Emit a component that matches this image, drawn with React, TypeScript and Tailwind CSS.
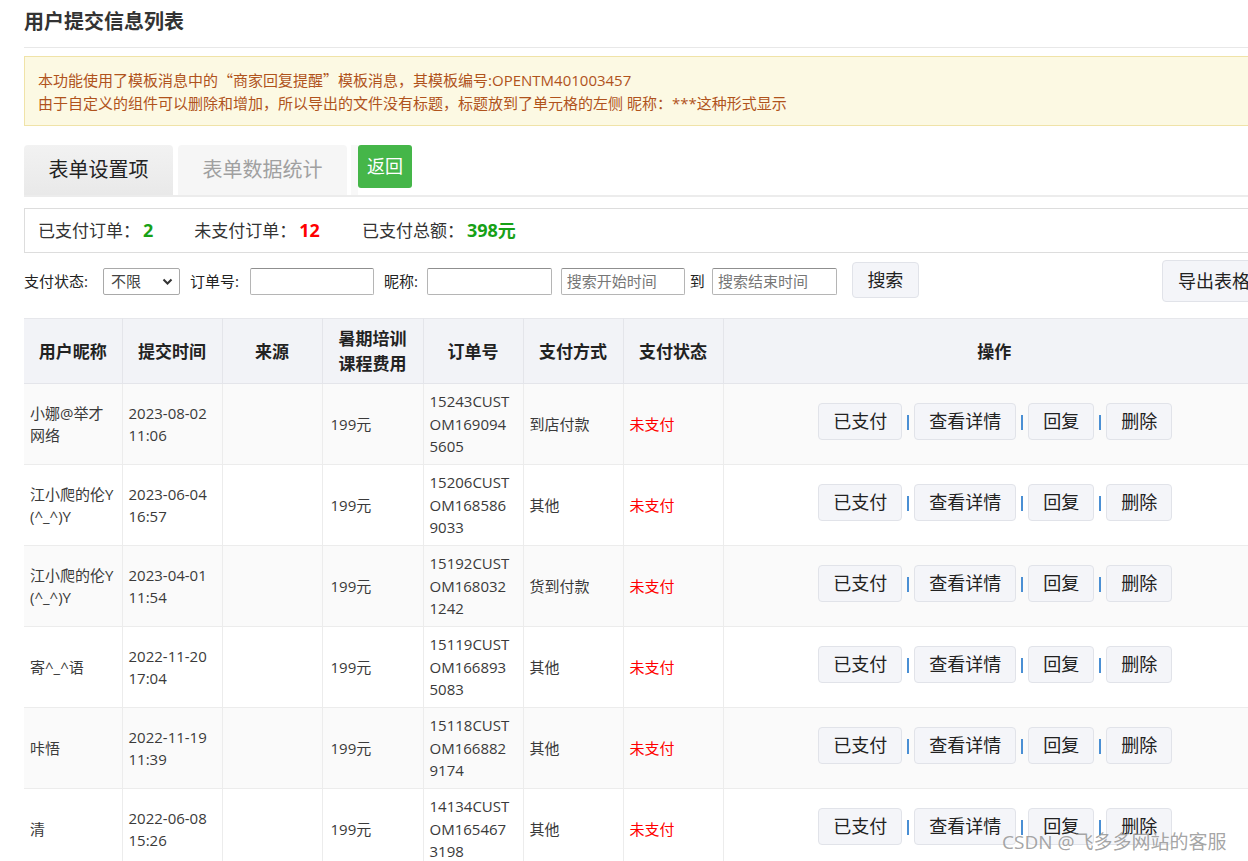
import React from "react";

const FONT = '"Open Sans","Noto Sans CJK SC",sans-serif';
const CJK = '"Noto Sans CJK SC",sans-serif';

type Row = { name: string; time: string; fee: string; order: string; pay: string; status: string };

const rows: Row[] = [
  { name: "小娜@举才网络", time: "2023-08-02 11:06", fee: "199元", order: "15243CUSTOM1690945605", pay: "到店付款", status: "未支付" },
  { name: "江小爬的伦Y(^_^)Y", time: "2023-06-04 16:57", fee: "199元", order: "15206CUSTOM1685869033", pay: "其他", status: "未支付" },
  { name: "江小爬的伦Y(^_^)Y", time: "2023-04-01 11:54", fee: "199元", order: "15192CUSTOM1680321242", pay: "货到付款", status: "未支付" },
  { name: "寄^_^语", time: "2022-11-20 17:04", fee: "199元", order: "15119CUSTOM1668935083", pay: "其他", status: "未支付" },
  { name: "咔悟", time: "2022-11-19 11:39", fee: "199元", order: "15118CUSTOM1668829174", pay: "其他", status: "未支付" },
  { name: "清", time: "2022-06-08 15:26", fee: "199元", order: "14134CUSTOM1654673198", pay: "其他", status: "未支付" },
];

function ActBtn({ children }: { children: React.ReactNode }) {
  return (
    <button className="h-[37px] px-[14px] rounded-[4px] border border-[#e1e3e9] bg-[#f4f5f9] text-[18px] leading-[24px] text-[#222]">
      {children}
    </button>
  );
}

function Sep() {
  return (
    <span className="w-[12px] flex justify-center">
      <span className="block w-[2px] h-[15px] mt-[3px] bg-[#4a8fd4]"></span>
    </span>
  );
}

export default function App() {
  return (
    <div className="w-[1248px] h-[861px] overflow-hidden bg-white relative" style={{ fontFamily: FONT }}>
      <div className="w-[1241px] ml-[24px]">
        {/* title */}
        <div className="pt-[8px] pb-[11px] border-b border-[#e8e8e8]">
          <h1 className="text-[20px] leading-[28px] font-bold text-[#333]">用户提交信息列表</h1>
        </div>

        {/* alert */}
        <div className="mt-[8px] h-[70px] border border-[#f0e3a8] bg-[#fcf9e3] px-[13px] pt-[11px] text-[15px] leading-[23px] text-[#b0531c]">
          <p>
            本功能使用了模板消息中的<span style={{ fontFamily: CJK }}>“</span>商家回复提醒<span style={{ fontFamily: CJK }}>”</span>模板消息，其模板编号:OPENTM401003457
          </p>
          <p>由于自定义的组件可以删除和增加，所以导出的文件没有标题，标题放到了单元格的左侧 昵称：***这种形式显示</p>
        </div>

        {/* tabs */}
        <div className="mt-[19px] flex items-start border-b-2 border-[#ececec]">
          <div className="w-[149px] h-[50px] rounded-t-[4px] bg-gradient-to-b from-[#f2f2f2] to-[#e9e9e9] flex items-center justify-center text-[20px] text-[#222]">
            表单设置项
          </div>
          <div className="ml-[5px] w-[169px] h-[50px] rounded-t-[4px] bg-[#f6f6f6] flex items-center justify-center text-[20px] text-[#a0a0a0]">
            表单数据统计
          </div>
          <div className="ml-[4px] w-[7px] h-[50px] bg-[#f8f8f8]"></div>
          <div className="w-[54px] h-[43px] rounded-[3px] bg-[#45b649] flex items-center justify-center text-[18px] text-white">
            返回
          </div>
        </div>

        {/* summary */}
        <div className="mt-[11px] h-[45px] border border-[#dddddd] flex items-center px-[13px] text-[17px] text-[#333]">
          <span>已支付订单：</span>
          <span className="font-bold text-[18px] ml-[3px] text-[#17a117]">2</span>
          <span className="ml-[41px]">未支付订单：</span>
          <span className="font-bold text-[18px] ml-[3px] text-[#ff0000]">12</span>
          <span className="ml-[42px]">已支付总额：</span>
          <span className="font-bold text-[18px] ml-[3px] text-[#17a117]">398元</span>
        </div>

        {/* filters */}
        <div className="mt-[7px] h-[42px] flex items-center text-[15px] text-[#222]">
          <span>支付状态:</span>
          <div className="relative ml-[15px] w-[77px] h-[27px]">
            <select className="appearance-none w-full h-full border border-[#a9a9a9] rounded-[2px] pl-[7px] text-[15px] text-[#444] bg-white">
              <option>不限</option>
            </select>
            <svg className="absolute right-[7px] top-[10px]" width="11" height="8" viewBox="0 0 11 8">
              <path d="M1.5 1.5 L5.5 5.5 L9.5 1.5" stroke="#333" strokeWidth="2" fill="none" />
            </svg>
          </div>
          <span className="ml-[10px]">订单号:</span>
          <input className="ml-[11px] w-[124px] h-[27px] border border-[#b5b5b5] border-t-[#8f8f8f] rounded-[2px] bg-white" />
          <span className="ml-[10px]">昵称:</span>
          <input className="ml-[9px] w-[125px] h-[27px] border border-[#b5b5b5] border-t-[#8f8f8f] rounded-[2px] bg-white" />
          <input
            placeholder="搜索开始时间"
            className="ml-[9px] w-[124px] h-[27px] border border-[#b5b5b5] border-t-[#8f8f8f] rounded-[2px] px-[5px] text-[15px] placeholder:text-[#777] bg-white"
          />
          <span className="ml-[5px] text-[#222]">到</span>
          <input
            placeholder="搜索结束时间"
            className="ml-[7px] w-[125px] h-[27px] border border-[#b5b5b5] border-t-[#8f8f8f] rounded-[2px] px-[5px] text-[15px] placeholder:text-[#777] bg-white"
          />
          <button className="ml-[15px] w-[67px] h-[36px] mb-[2px] rounded-[4px] border border-[#e1e3e9] bg-[#f4f5f9] text-[18px] text-[#222]">
            搜索
          </button>
          <button className="ml-auto mr-[-3px] w-[106px] h-[42px] rounded-[4px] border border-[#e1e3e9] bg-[#f4f5f9] text-[18px] text-[#222] text-left pl-[15px]">
            导出表格
          </button>
        </div>

        {/* table */}
        <table className="mt-[16px] w-[1241px] table-fixed border-collapse">
          <colgroup>
            <col className="w-[98px]" />
            <col className="w-[100px]" />
            <col className="w-[100px]" />
            <col className="w-[101px]" />
            <col className="w-[100px]" />
            <col className="w-[100px]" />
            <col className="w-[100px]" />
            <col className="w-[542px]" />
          </colgroup>
          <thead>
            <tr className="bg-[#f2f3f7] border-t border-[#e6e7eb]">
              {["用户昵称", "提交时间", "来源"].map((h) => (
                <th key={h} className="h-[65px] border-r border-b border-[#e4e5ea] text-[17px] leading-[25px] font-bold text-[#222]">
                  {h}
                </th>
              ))}
              <th className="h-[65px] border-r border-b border-[#e4e5ea] text-[17px] leading-[25px] font-bold text-[#222]">
                暑期培训
                <br />
                课程费用
              </th>
              {["订单号", "支付方式", "支付状态"].map((h) => (
                <th key={h} className="h-[65px] border-r border-b border-[#e4e5ea] text-[17px] leading-[25px] font-bold text-[#222]">
                  {h}
                </th>
              ))}
              <th className="h-[65px] border-b border-[#e4e5ea] text-[17px] leading-[25px] font-bold text-[#222]">操作</th>
            </tr>
          </thead>
          <tbody>
            {rows.map((r, i) => (
              <tr key={i} className={i % 2 === 0 ? "bg-[#fafafa]" : "bg-white"}>
                <td className="h-[81px] px-[6px] border-r border-b border-[#ececec] text-[15px] leading-[22.5px] text-[#3a3a3a] break-all align-middle">
                  {r.name}
                </td>
                <td className="px-[6px] border-r border-b border-[#ececec] text-[15px] leading-[22.5px] text-[#3a3a3a] align-middle">
                  {r.time}
                </td>
                <td className="px-[6px] border-r border-b border-[#ececec]"></td>
                <td className="px-[8px] border-r border-b border-[#ececec] text-[15px] leading-[22.5px] text-[#3a3a3a] align-middle">
                  {r.fee}
                </td>
                <td className="pl-[6px] pr-[12px] border-r border-b border-[#ececec] text-[15px] leading-[22.5px] text-[#3a3a3a] break-all align-middle">
                  {r.order}
                </td>
                <td className="px-[6px] border-r border-b border-[#ececec] text-[15px] leading-[22.5px] text-[#3a3a3a] align-middle">
                  {r.pay}
                </td>
                <td className="px-[6px] border-r border-b border-[#ececec] text-[15px] leading-[22.5px] text-[#ff0000] align-middle">
                  {r.status}
                </td>
                <td className="border-b border-[#ececec] align-middle">
                  <div className="flex items-center justify-center pb-[6px] pl-[2px]">
                    <ActBtn>已支付</ActBtn>
                    <Sep />
                    <ActBtn>查看详情</ActBtn>
                    <Sep />
                    <ActBtn>回复</ActBtn>
                    <Sep />
                    <ActBtn>删除</ActBtn>
                  </div>
                </td>
              </tr>
            ))}
          </tbody>
        </table>
      </div>

      <div className="absolute left-[1002px] top-[829px] text-[19px] leading-[26px] text-[#9a9a9a]/90 pointer-events-none" style={{ fontFamily: FONT }}>
        CSDN @飞多多网站的客服
      </div>
    </div>
  );
}
